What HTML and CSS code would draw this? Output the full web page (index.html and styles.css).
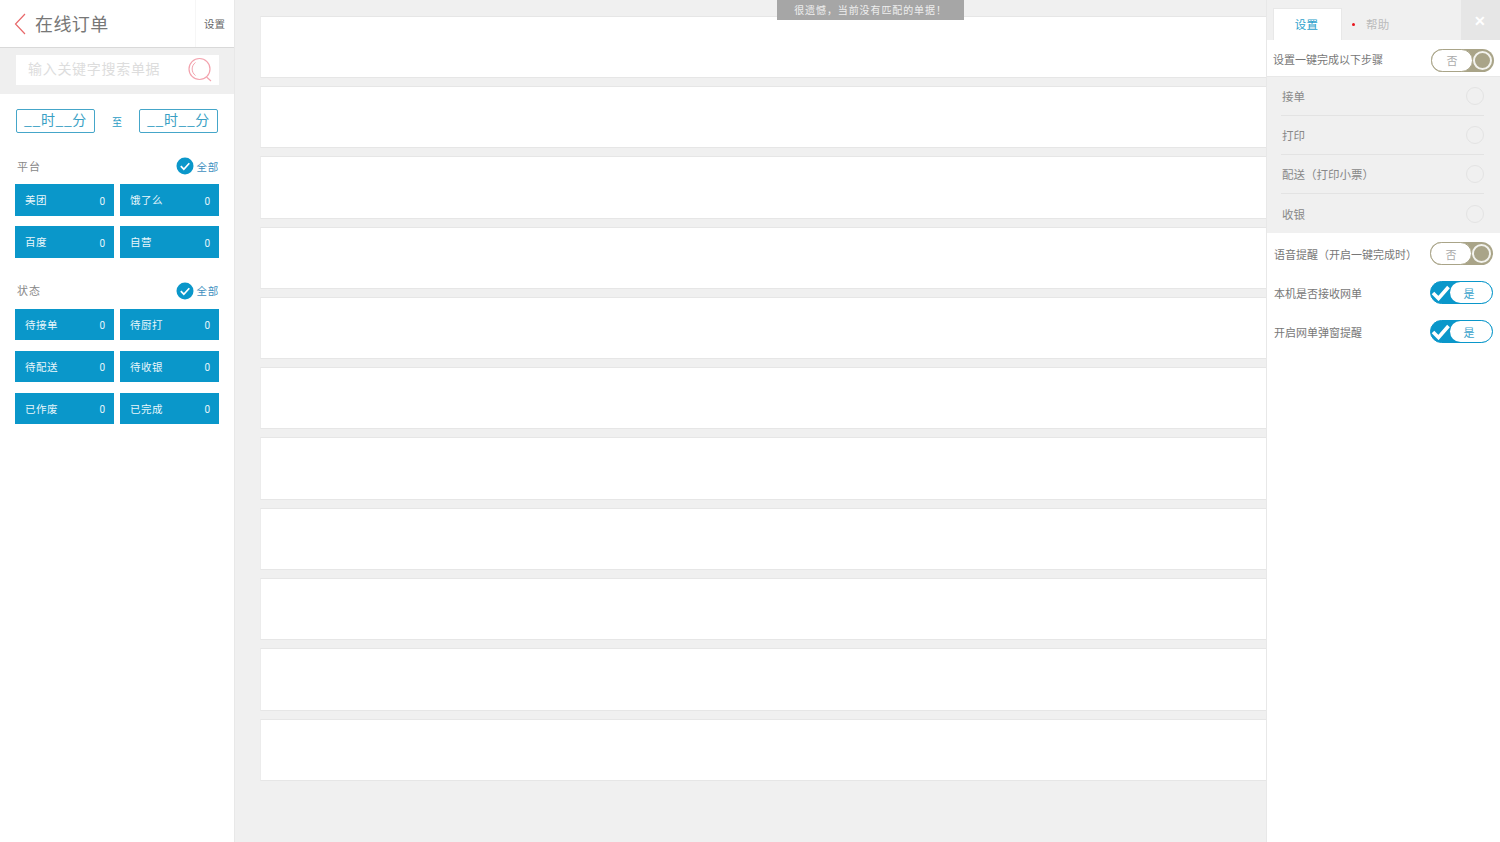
FILE: index.html
```html
<!DOCTYPE html>
<html lang="zh-CN">
<head>
<meta charset="utf-8">
<title>在线订单</title>
<link rel="stylesheet" href="styles.css">
</head>
<body>
<div class="app">
  <aside class="side">
    <header class="side-head">
      <svg class="back" width="12" height="22" viewBox="0 0 12 22"><path d="M11 1 1.500 11 11 21" fill="none" stroke="#e8686a" stroke-width="1.200"/></svg>
      <h1 class="title">在线订单</h1>
      <div class="head-set">设置</div>
    </header>
    <div class="search-wrap">
      <div class="search">
        <span class="ph">输入关键字搜索单据</span>
        <svg class="search-icon" width="26" height="26" viewBox="0 0 26 26"><circle cx="12.500" cy="12" r="10.500" fill="none" stroke="#f3a3ae" stroke-width="1.200"/><path d="M8.500 5.500a8 8 0 0 0 0 13" fill="none" stroke="#f3a3ae" stroke-width="1"/><path d="m19.500 20 4.500 4" fill="none" stroke="#f3a3ae" stroke-width="1.100"/></svg>
      </div>
    </div>
    <div class="time-row">
      <div class="time">__时__分</div>
      <span class="to">至</span>
      <div class="time">__时__分</div>
    </div>
    <section class="group group-a">
      <div class="group-head">
        <span class="group-name">平台</span>
        <span class="all"><svg width="18" height="18" viewBox="0 0 18 18"><circle cx="9" cy="9" r="8.500" fill="#0a97ca"/><path d="m4.800 9.200 3 3 5.500-6" fill="none" stroke="#fff" stroke-width="1.700"/></svg>全部</span>
      </div>
      <div class="grid">
        <div class="tile"><span>美团</span><span class="n">0</span></div>
        <div class="tile"><span>饿了么</span><span class="n">0</span></div>
        <div class="tile"><span>百度</span><span class="n">0</span></div>
        <div class="tile"><span>自营</span><span class="n">0</span></div>
      </div>
    </section>
    <section class="group group-b">
      <div class="group-head">
        <span class="group-name">状态</span>
        <span class="all"><svg width="18" height="18" viewBox="0 0 18 18"><circle cx="9" cy="9" r="8.500" fill="#0a97ca"/><path d="m4.800 9.200 3 3 5.500-6" fill="none" stroke="#fff" stroke-width="1.700"/></svg>全部</span>
      </div>
      <div class="grid">
        <div class="tile"><span>待接单</span><span class="n">0</span></div>
        <div class="tile"><span>待厨打</span><span class="n">0</span></div>
        <div class="tile"><span>待配送</span><span class="n">0</span></div>
        <div class="tile"><span>待收银</span><span class="n">0</span></div>
        <div class="tile"><span>已作废</span><span class="n">0</span></div>
        <div class="tile"><span>已完成</span><span class="n">0</span></div>
      </div>
    </section>
  </aside>

  <main class="main">
    <div class="card"></div><div class="card"></div><div class="card"></div><div class="card"></div>
    <div class="card"></div><div class="card"></div><div class="card"></div><div class="card"></div>
    <div class="card"></div><div class="card"></div><div class="card"></div>
  </main>

  <aside class="panel">
    <nav class="tabs">
      <div class="tab active">设置</div>
      <div class="tab help"><i class="dot"></i>帮助</div>
      <div class="close">✕</div>
    </nav>
    <div class="row row-first">
      <span class="row-label">设置一键完成以下步骤</span>
      <div class="sw off"><span class="sw-face">否</span><i class="knob"></i></div>
    </div>
    <ul class="steps">
      <li class="step"><span>接单</span><i class="radio"></i></li>
      <li class="step"><span>打印</span><i class="radio"></i></li>
      <li class="step"><span>配送（打印小票）</span><i class="radio"></i></li>
      <li class="step"><span>收银</span><i class="radio"></i></li>
    </ul>
    <div class="opts">
      <div class="row"><span>语音提醒（开启一键完成时）</span><div class="sw off"><span class="sw-face">否</span><i class="knob"></i></div></div>
      <div class="row"><span>本机是否接收网单</span><div class="sw on"><svg class="tick" width="20" height="16" viewBox="0 0 20 16"><path d="m2 8 5.500 5.500L17.500 2" fill="none" stroke="#fff" stroke-width="3.600"/></svg><span class="sw-face">是</span></div></div>
      <div class="row"><span>开启网单弹窗提醒</span><div class="sw on"><svg class="tick" width="20" height="16" viewBox="0 0 20 16"><path d="m2 8 5.500 5.500L17.500 2" fill="none" stroke="#fff" stroke-width="3.600"/></svg><span class="sw-face">是</span></div></div>
    </div>
  </aside>

  <div class="toast">很遗憾，当前没有匹配的单据！</div>
</div>
</body>
</html>
```
FILE: styles.css
```css
* { box-sizing: border-box; }
html, body { margin: 0; height: 100%; }
body {
  font-family: "Noto Sans CJK SC", "Liberation Sans", sans-serif;
  color: #777;
  background: #f0f0f0;
  overflow: hidden;
}
ul { list-style: none; margin: 0; padding: 0; }
.app { position: relative; display: flex; width: 1500px; height: 842px; overflow: hidden; }

/* left column */
.side { flex: 0 0 234px; background: #fff; border-right: 1px solid #e8e8e8; }
.side-head { display: flex; align-items: center; height: 48px; border-bottom: 1px solid #d9d9d9; padding-left: 15px; }
.back { flex: none; margin-left: -1px; }
.title { flex: 1; margin: -1px 0 0 9px; font-size: 18px; font-weight: 400; letter-spacing: .4px; color: #777; }
.head-set { flex: 0 0 39px; height: 100%; border-left: 1px solid #f6f6f6; display: flex; align-items: center; padding-left: 8px; font-size: 10.500px; color: #666; }
.search-wrap { height: 46px; background: #efefef; padding: 7px 15px 9px 16px; }
.search { height: 30px; background: #fff; display: flex; align-items: center; justify-content: space-between; padding: 0 6px 0 12px; }
.ph { font-size: 14px; letter-spacing: .7px; color: #ddd; margin-top: -5px; }
.search-icon { flex: none; }
.time-row { display: flex; align-items: center; justify-content: space-between; padding: 15px 16px 0 16px; }
.time { width: 79px; height: 24px; border: 1px solid #45a6c9; border-radius: 2px; font-size: 14px; line-height: 19px; letter-spacing: .6px; text-align: center; color: #3a9fc4; }
.to { font-size: 10px; color: #2a9cc4; }
.group { padding: 0 15px 0 15px; }
.group-a { margin-top: 24px; }
.group-b { margin-top: 24px; }
.group-head { display: flex; align-items: center; justify-content: space-between; height: 18px; margin-bottom: 9px; }
.group-name { font-size: 11px; letter-spacing: 1px; color: #888; margin-left: 2px; margin-top: -1px; }
.all { display: flex; align-items: center; gap: 1px; font-size: 10.500px; letter-spacing: .8px; color: #3e8fc0; margin-left: -4px; }
.all svg { margin-right: 1px; }
.grid { display: grid; grid-template-columns: 99px 99px; column-gap: 6px; row-gap: 10.500px; }
.tile { height: 31.500px; background: #0a97ca; color: #e8f6fb; display: flex; align-items: center; justify-content: space-between; padding: 0 9px 0 10px; font-size: 10.500px; letter-spacing: .5px; }
.n { letter-spacing: 0; font-family: "Roboto", sans-serif; font-size: 10px; margin-top: 3px; }

/* centre list */
.main { flex: 1; min-width: 0; display: flex; flex-direction: column; gap: 8px; padding: 15.700px 0 0 25px; }
.card { flex: 0 0 62.300px; background: #fff; border: 1px solid #e6e6e6; border-left-color: #ececec; border-right: 0; }

/* right panel */
.panel { flex: 0 0 234px; background: #fff; border-left: 1px solid #e8e8e8; }
.tabs { position: relative; display: flex; height: 40px; background: #f0f0f0; padding: 8px 0 0 6px; }
.tab { font-size: 11.500px; display: flex; align-items: center; height: 32px; }
.active { width: 69px; background: #fff; border: 1px solid #e8e8e8; border-bottom: 0; justify-content: center; color: #2c9fcb; letter-spacing: .3px; padding: 0 2px 2px 0; }
.help { color: #bbb; margin-left: 10px; gap: 11px; letter-spacing: .3px; }
.dot { width: 3px; height: 3px; border-radius: 50%; background: #e8141c; }
.close { position: absolute; top: 0; right: 0; width: 39px; height: 40px; background: #e6e6e6; color: #fff; display: flex; align-items: center; justify-content: center; font-size: 14px; font-weight: 700; padding-right: 1px; }
.row { display: flex; align-items: center; justify-content: space-between; height: 39px; padding: 0 7px 0 7px; font-size: 11px; color: #777; }
.row-first { height: 37px; padding: 4px 6px 0 6px; border-bottom: 1px solid #e8e8e8; }
.row-label { margin-top: -2px; }
.steps { background: #f0f0f0; padding: 0 16px 0 14px; height: 156px; }
.step { display: flex; align-items: center; justify-content: space-between; height: 39px; border-bottom: 1px solid #e3e3e3; font-size: 11.500px; color: #888; padding-left: 1px; }
.step:last-child { border-bottom: 0; }
.radio { width: 18px; height: 18px; border-radius: 50%; border: 1px solid #e3e3e3; }
.opts { padding-top: 1px; }
.sw { flex: none; position: relative; width: 63px; height: 23px; border-radius: 12px; display: flex; align-items: center; }
.sw-face { display: flex; align-items: center; justify-content: center; height: 100%; background: #fff; border-radius: 12px; font-size: 11px; }
.off { background: #a9a488; }
.off .sw-face { width: 42px; border: 1px solid #a9a488; color: #aaa; }
.knob { position: absolute; right: 2px; top: 2px; width: 19px; height: 19px; border-radius: 50%; border: 2px solid #f3f3ee; background: #a9a488; }
.on { background: #0a97ca; border: 1px solid #0a97ca; justify-content: flex-end; }
.on .sw-face { width: 42px; color: #3aa3cc; padding-right: 4px; }
.tick { position: absolute; left: 0; top: 3px; }

/* toast over the list */
.toast { position: absolute; top: 0; left: 777px; width: 187px; height: 20px; background: #a6a6a6; color: #eee; font-size: 10px; letter-spacing: .9px; line-height: 20px; text-align: center; }
```
